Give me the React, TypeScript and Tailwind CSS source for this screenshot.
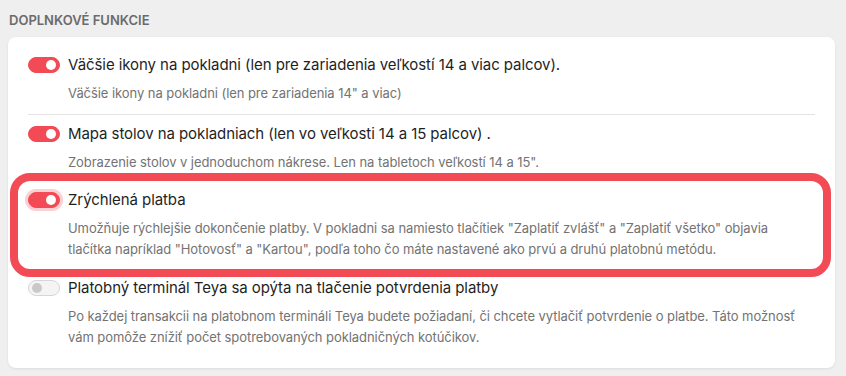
import { useState } from 'react';

type Feature = {
  id: string;
  title: string;
  desc: string;
  on: boolean;
  highlight?: boolean;
};

const features: Feature[] = [
  {
    id: 'icons',
    title: 'Väčšie ikony na pokladni (len pre zariadenia veľkostí 14 a viac palcov).',
    desc: 'Väčšie ikony na pokladni (len pre zariadenia 14" a viac)',
    on: true,
  },
  {
    id: 'map',
    title: 'Mapa stolov na pokladniach (len vo veľkosti 14 a 15 palcov) .',
    desc: 'Zobrazenie stolov v jednoduchom nákrese. Len na tabletoch veľkostí 14 a 15".',
    on: true,
  },
  {
    id: 'fast',
    title: 'Zrýchlená platba',
    desc: 'Umožňuje rýchlejšie dokončenie platby. V pokladni sa namiesto tlačítiek "Zaplatiť zvlášť" a "Zaplatiť všetko" objavia tlačítka napríklad "Hotovosť" a "Kartou", podľa toho čo máte nastavené ako prvú a druhú platobnú metódu.',
    on: true,
    highlight: true,
  },
  {
    id: 'teya',
    title: 'Platobný terminál Teya sa opýta na tlačenie potvrdenia platby',
    desc: 'Po každej transakcii na platobnom termináli Teya budete požiadaní, či chcete vytlačiť potvrdenie o platbe. Táto možnosť vám pomôže znížiť počet spotrebovaných pokladničných kotúčikov.',
    on: false,
  },
];

function Toggle({ on, focused, onClick }: { on: boolean; focused?: boolean; onClick: () => void }) {
  return (
    <button
      onClick={onClick}
      className={`relative flex h-4 w-8 shrink-0 items-center rounded-full border transition-colors ${
        on ? 'border-[#f24b55] bg-[#f24b55]' : 'border-[#d6d6d6] bg-[#f4f4f4]'
      } ${focused ? 'ring-[3px] ring-[#fccfd2]' : ''}`}
    >
      <span
        className={`absolute top-1/2 h-[10px] w-[10px] -translate-y-1/2 rounded-full ${
          on ? 'right-[3px] bg-white' : 'left-[3px] bg-[#c9c9c9]'
        }`}
      />
    </button>
  );
}

export default function App() {
  const [state, setState] = useState(features.map((f) => f.on));

  return (
    <div
      className="min-h-[376px] w-full bg-[#efefef] px-2 pt-[12px]"
      style={{ fontFamily: 'Inter, "Noto Sans", sans-serif' }}
    >
      {/* Section heading */}
      <h2 className="pl-px text-[13px] font-semibold uppercase leading-[16px] text-[#6b6b6b]">
        Doplnkové funkcie
      </h2>

      {/* Card */}
      <div className="mt-[9px] w-[827px] rounded-lg bg-white px-5 pb-[20px] pt-[18px] shadow-[0_1px_3px_rgba(0,0,0,0.08)]">
        {features.map((f, i) => (
          <div key={f.id}>
            <div
              className={
                f.highlight
                  ? 'ml-[-18px] mr-[-16px] rounded-[20px] border-[8px] border-[#f24b55] py-[9px] pl-[10px] pr-[24px]'
                  : i === 3
                  ? 'pt-[1px]'
                  : ''
              }
            >
              <div className="flex items-center gap-2">
                <Toggle
                  on={state[i]}
                  focused={f.highlight}
                  onClick={() => setState((s) => s.map((v, j) => (j === i ? !v : v)))}
                />
                <span className="text-[15px] leading-[20px] tracking-[-0.005em] text-[#1f1f1f]">{f.title}</span>
              </div>
              <p className="mt-[8px] pl-10 text-[13px] leading-[21px] tracking-[-0.005em] text-[#737373]">{f.desc}</p>
            </div>
            {i === 0 && <div className="mb-[9px] mt-[10px] h-px bg-[#e4e4e4]" />}
          </div>
        ))}
      </div>
    </div>
  );
}
